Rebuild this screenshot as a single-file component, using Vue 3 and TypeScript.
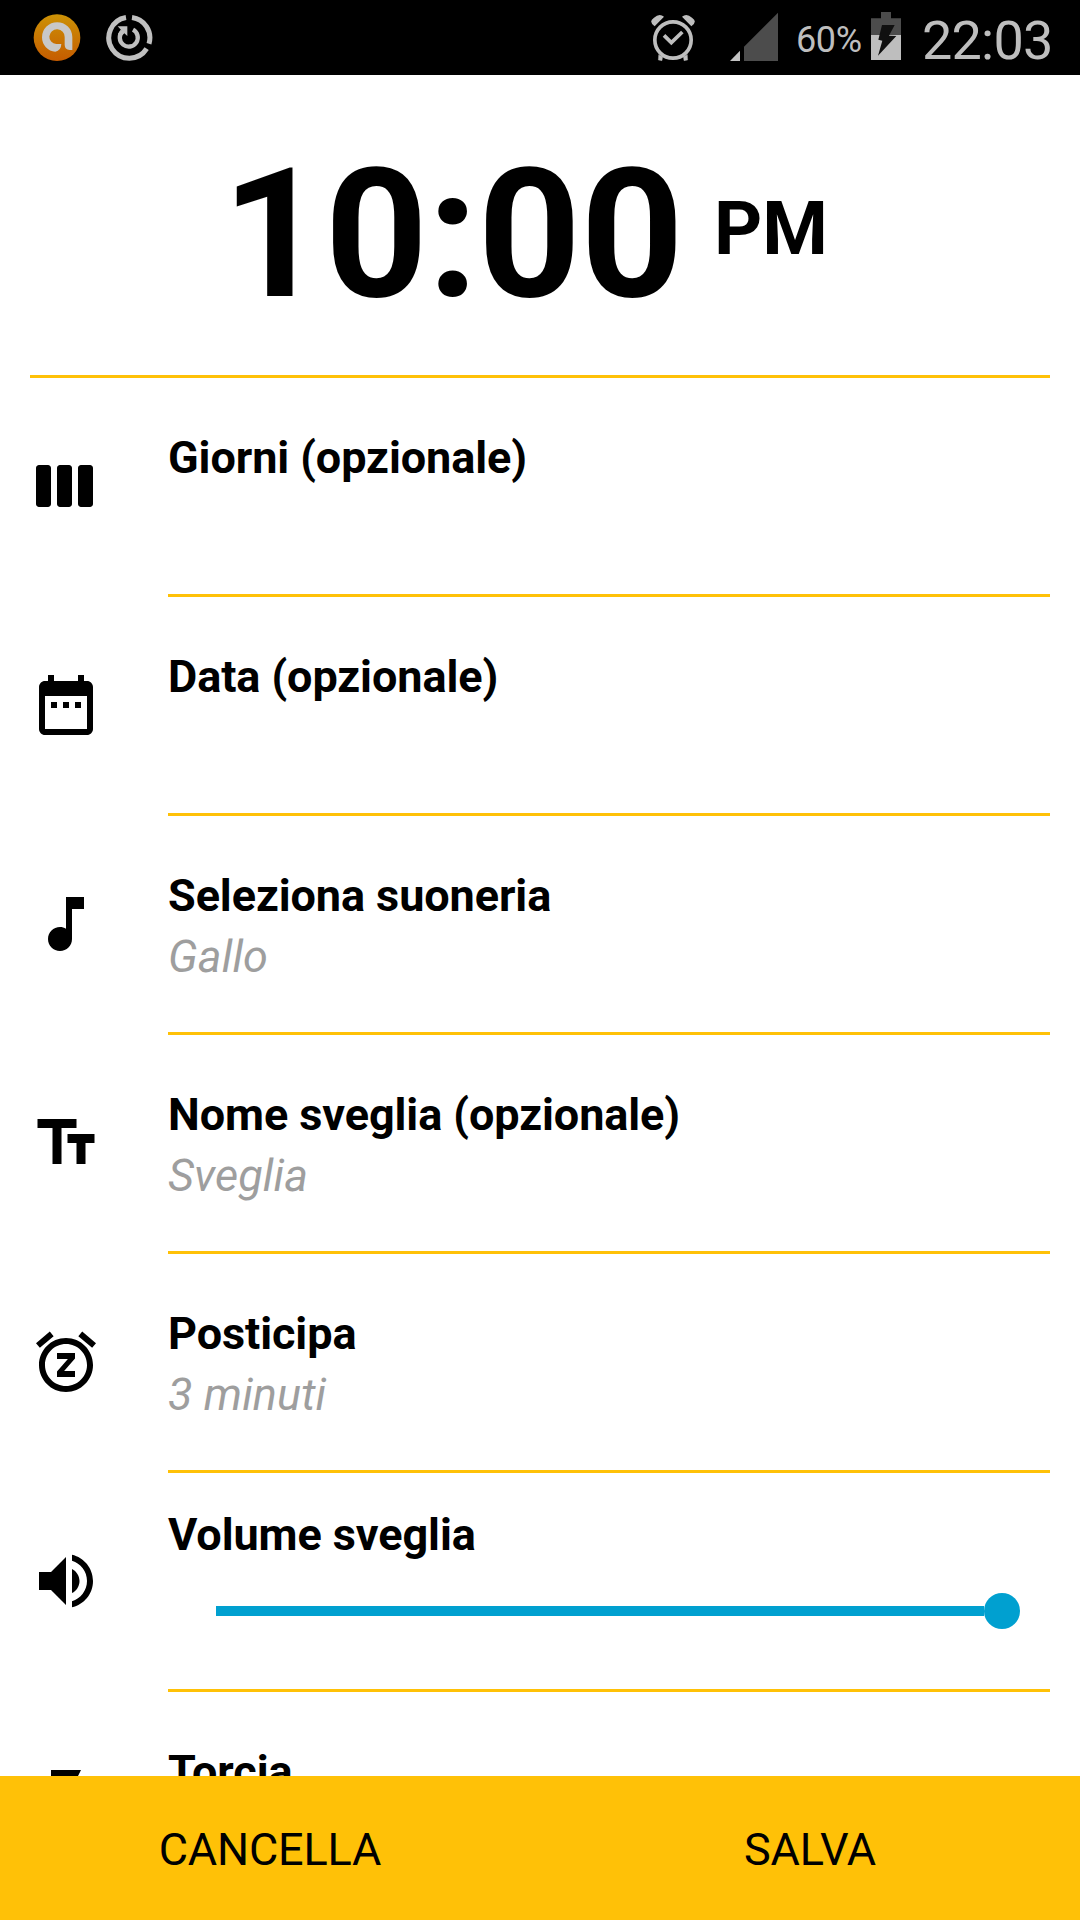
<script setup lang="ts">
interface AlarmRow {
  id: string
  title: string
  subtitle?: string
  icon: string
  volume?: number
}

const rows: AlarmRow[] = [
  {
    id: 'days',
    title: 'Giorni (opzionale)',
    icon: 'M6 5H3c-.55 0-1 .45-1 1v12c0 .55.45 1 1 1h3c.55 0 1-.45 1-1V6c0-.55-.45-1-1-1zm14 0h-3c-.55 0-1 .45-1 1v12c0 .55.45 1 1 1h3c.55 0 1-.45 1-1V6c0-.55-.45-1-1-1zm-7 0h-3c-.55 0-1 .45-1 1v12c0 .55.45 1 1 1h3c.55 0 1-.45 1-1V6c0-.55-.45-1-1-1z',
  },
  {
    id: 'date',
    title: 'Data (opzionale)',
    icon: 'M9 11H7v2h2v-2zm4 0h-2v2h2v-2zm4 0h-2v2h2v-2zm2-7h-1V2h-2v2H8V2H6v2H5c-1.11 0-1.99.9-1.99 2L3 20c0 1.1.89 2 2 2h14c1.1 0 2-.9 2-2V6c0-1.1-.9-2-2-2zm0 16H5V9h14v11z',
  },
  {
    id: 'ringtone',
    title: 'Seleziona suoneria',
    subtitle: 'Gallo',
    icon: 'M12 3v10.55c-.59-.34-1.27-.55-2-.55-2.21 0-4 1.79-4 4s1.79 4 4 4 4-1.79 4-4V7h4V3h-6z',
  },
  {
    id: 'name',
    title: 'Nome sveglia (opzionale)',
    subtitle: 'Sveglia',
    icon: 'M2.5 4v3h5v12h3V7h5V4h-13zm19 5h-9v3h3v7h3v-7h3V9z',
  },
  {
    id: 'snooze',
    title: 'Posticipa',
    subtitle: '3 minuti',
    icon: 'M7.88 3.39L6.6 1.86 2 5.71l1.29 1.53 4.59-3.85zM22 5.72l-4.6-3.86-1.29 1.53 4.6 3.86L22 5.72zM12 4c-4.97 0-9 4.03-9 9s4.02 9 9 9c4.97 0 9-4.03 9-9s-4.03-9-9-9zm0 16c-3.87 0-7-3.13-7-7s3.13-7 7-7 7 3.13 7 7-3.13 7-7 7zm-3-9h3.63L9 15.2V17h6v-2h-3.63L15 10.8V9H9v2z',
  },
  {
    id: 'volume',
    title: 'Volume sveglia',
    volume: 100,
    icon: 'M3 9v6h4l5 5V4L7 9H3zm13.5 3c0-1.77-1.02-3.29-2.5-4.03v8.05c1.48-.73 2.5-2.25 2.5-4.02zM14 3.23v2.06c2.89.86 5 3.54 5 6.71s-2.11 5.85-5 6.71v2.06c4.01-.91 7-4.49 7-8.77s-2.99-7.86-7-8.77z',
  },
  {
    id: 'torch',
    title: 'Torcia',
    icon: 'M7 2v11h3v9l7-12h-4l4-8z',
  },
]
</script>

<template>
  <div class="screen">
    <header class="status">
      <svg class="s-avast" viewBox="99 42 144 144" width="48" height="48">
        <defs>
          <linearGradient id="orange" x1="0" y1="0" x2="0" y2="1">
            <stop offset="0" stop-color="#cc9206" />
            <stop offset="1" stop-color="#c65c00" />
          </linearGradient>
        </defs>
        <circle cx="171" cy="113" r="70" fill="url(#orange)" />
        <path
          d="M217 150h-8q-15-2-15-16v-23a23 22 0 1 0-25 21h15q-1 20-18 23a43 43 0 0 1-40-43a45 45 0 0 1 91 0z"
          fill="#c8c8c8"
        />
      </svg>
      <svg class="s-power" viewBox="315 42 144 144" width="48" height="48" fill="none" stroke="#c0c0c0">
        <path d="M378 52.500A61.500 61.500 0 1 0 440 146" stroke-width="15" />
        <path d="M396 52.500A61.500 61.500 0 0 1 447 131" stroke-width="15" />
        <path d="M399 89A27 27 0 1 1 367 94" stroke-width="13" />
        <path d="M353 79h29v29l-9-8-10 10-9-9 10-10z" fill="#c0c0c0" stroke="none" />
      </svg>
      <div class="spacer"></div>
      <svg class="s-alarm" viewBox="60 39 138 147" width="46" height="49" fill="none" stroke="#bebebe">
        <circle cx="129" cy="120" r="54.500" stroke-width="11" />
        <path d="M102 106l22 22 33-32" stroke-width="11" />
        <path d="M74 79q-20-14-2-26 16-15 30-3zM184 79q20-14 2-26-16-15-30-3z" fill="#bebebe" stroke="none" />
        <path d="M86 164l12 6-2 12-11-2zM172 164l-12 6 2 12 11-2z" fill="#bebebe" stroke="#bebebe" stroke-width="1" />
      </svg>
      <svg class="s-signal" viewBox="300 36 144 147" width="48" height="49">
        <path d="M300 183h30v-31z" fill="#c4c4c4" />
        <path d="M342 183v-43L444 38v145z" fill="#4c4c4c" />
      </svg>
      <span class="percent">60%</span>
      <svg class="s-battery" viewBox="723 36 90 144" width="30" height="48">
        <path d="M753 36h30v19h30v50h-90V55h30z" fill="#4c4c4c" />
        <path d="M723 105h90v75h-90z" fill="#bebebe" />
        <path d="M756 75h38l-17 32 22 1-55 59 13-45-12-3z" fill="#101010" />
      </svg>
      <span class="time">22:03</span>
    </header>

    <main class="content">
      <section class="clock">
        <span class="digits">10:00</span>
        <span class="meridiem">PM</span>
      </section>

      <section v-for="row in rows" :key="row.id" class="row">
        <svg class="icon" viewBox="0 0 24 24" width="72" height="72"><path :d="row.icon" /></svg>
        <div class="body" :class="{ compact: row.volume !== undefined }">
          <div class="title">{{ row.title }}</div>
          <div v-if="row.subtitle" class="subtitle">{{ row.subtitle }}</div>
          <div v-if="row.volume !== undefined" class="slider">
            <div class="track" :style="{ width: row.volume + '%' }"></div>
            <div class="thumb"></div>
          </div>
        </div>
      </section>
    </main>

    <footer class="actions">
      <div class="action">CANCELLA</div>
      <div class="action">SALVA</div>
    </footer>
  </div>
</template>

<style>
body {
  margin: 0;
  background: #fff;
}
</style>

<style scoped>
.screen {
  width: 1080px;
  height: 1920px;
  display: flex;
  flex-direction: column;
  overflow: hidden;
  background: #fff;
  color: #000;
  font-family: Roboto, sans-serif;
}

.status {
  flex: none;
  height: 75px;
  display: flex;
  align-items: flex-start;
  background: #000;
  color: #bebebe;
  white-space: nowrap;
}

.status svg {
  flex: none;
}

.s-avast {
  margin: 14px 0 0 33px;
}

.s-power {
  margin: 14px 0 0 24px;
}

.spacer {
  flex: 1;
}

.s-alarm {
  margin: 13px 34px 0 0;
}

.s-signal {
  margin: 12px 18px 0 0;
}

.percent {
  width: 75px;
  margin-top: 20px;
  font-size: 36px;
  line-height: 40px;
  letter-spacing: -0.4px;
}

.s-battery {
  margin-top: 12px;
}

.time {
  width: 179px;
  margin-top: 11px;
  text-indent: 21px;
  font-size: 54px;
  line-height: 60px;
  letter-spacing: -0.8px;
}

.content {
  flex: 1;
  min-height: 0;
  overflow: hidden;
  padding: 0 30px;
}

.clock {
  display: flex;
  align-items: flex-start;
  height: 300px;
  padding-left: 192px;
  border-bottom: 3px solid #ffc107;
}

.digits {
  width: 456px;
  margin-top: 60px;
  font-size: 180px;
  line-height: 200px;
  font-weight: 700;
  letter-spacing: -0.5px;
}

.meridiem {
  margin: 113px 0 0 36px;
  font-size: 75px;
  line-height: 80px;
  font-weight: 700;
}

.row {
  display: flex;
  align-items: flex-start;
  height: 219px;
}

.icon {
  flex: none;
  margin: 72px 66px 0 0;
}

.body {
  flex: 1;
  box-sizing: border-box;
  height: 219px;
  padding-top: 54px;
  border-bottom: 3px solid #ffc107;
}

.compact {
  padding-top: 36px;
}

.title {
  font-size: 45px;
  line-height: 52px;
  font-weight: 700;
  letter-spacing: -0.08px;
}

.subtitle {
  margin-top: 5px;
  font-size: 45px;
  line-height: 60px;
  font-style: italic;
  letter-spacing: 0.1px;
  color: #9e9e9e;
}

.slider {
  display: flex;
  align-items: center;
  height: 36px;
  margin: 32px 30px 0 48px;
}

.track {
  height: 10px;
  background: #00a0d0;
}

.thumb {
  flex: none;
  width: 36px;
  height: 36px;
  border-radius: 50%;
  background: #00a0d0;
}

.actions {
  flex: none;
  display: flex;
  height: 144px;
  background: #ffc107;
}

.action {
  flex: 1;
  text-align: center;
  font-size: 45px;
  line-height: 148px;
  letter-spacing: -0.15px;
}
</style>
